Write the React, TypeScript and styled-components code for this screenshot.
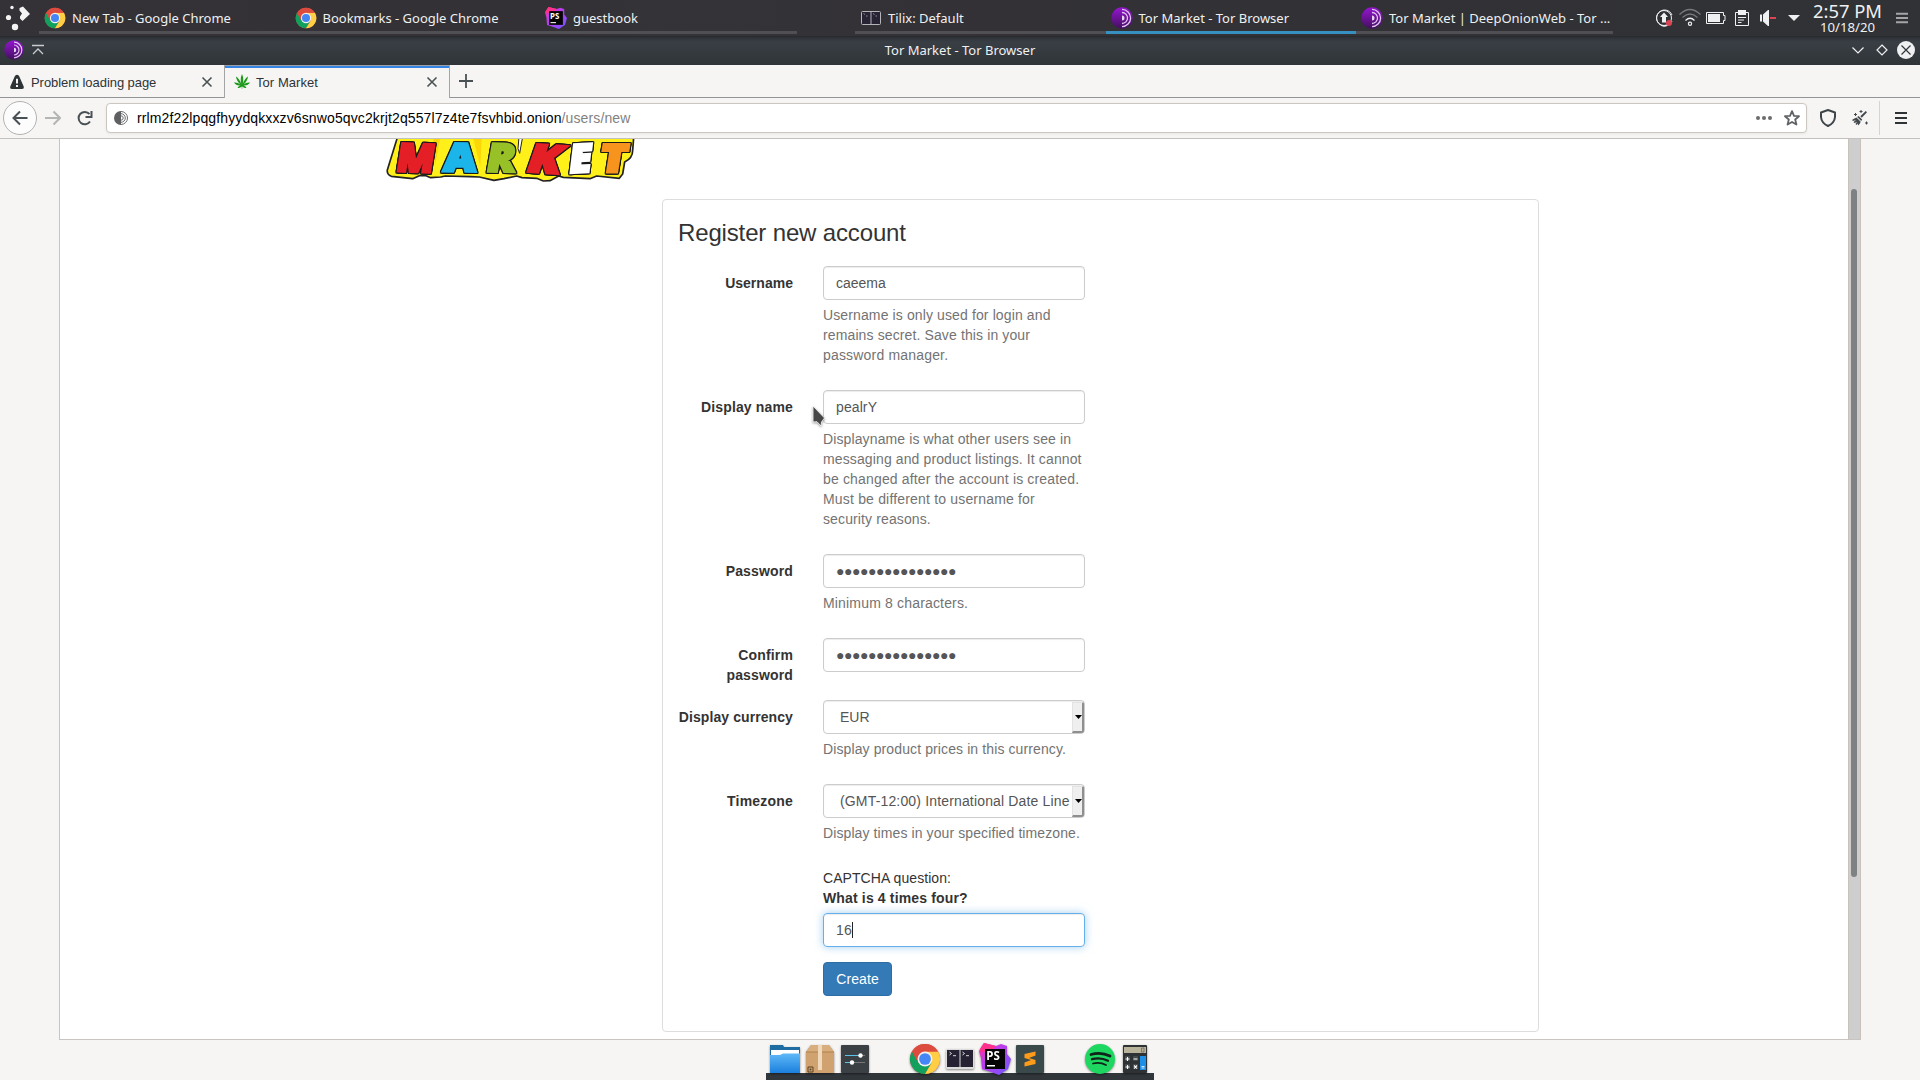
import React from 'react';
import styled, { createGlobalStyle, css } from 'styled-components';

const GlobalStyle = createGlobalStyle`
  * { box-sizing: border-box; }
  html, body { margin: 0; padding: 0; overflow: hidden; background: #f6f5f4; }
  body { font-family: "Liberation Sans", Arial, sans-serif; }
  svg { display: block; flex: none; }
`;

const Desktop = styled.div`
  width: 1920px;
  height: 1080px;
  display: flex;
  flex-direction: column;
  overflow: hidden;
  background: #f6f5f4;
`;

/* ---------- desktop panel ---------- */

const Panel = styled.div`
  height: 36px;
  flex: none;
  display: flex;
  background: linear-gradient(90deg, #343236 0%, #333135 30%, #343338 34%, #333135 52%, #303236 100%);
  color: #eff0f1;
  font-family: "Noto Sans", sans-serif;
`;
const Launcher = styled.div`
  width: 39px;
  padding: 4px 0 0 5px;
`;
const TaskGroup = styled.div<{ $gap: number }>`
  display: flex;
  width: 758px;
  margin-right: ${p => p.$gap}px;
`;
const Task = styled.div<{ $active?: boolean; $wide?: boolean }>`
  width: ${p => (p.$wide ? 257 : 250.5)}px;
  height: 34px;
  display: flex;
  align-items: flex-start;
  padding: 7px 0 0 5px;
  border-bottom: 3px solid ${p => (p.$active ? '#3690c0' : '#505054')};
`;
const TaskIcon = styled.span`
  width: 22px;
  height: 22px;
  margin-right: 6px;
`;
const TaskText = styled.span`
  font-size: 13px;
  line-height: 22px;
  white-space: nowrap;
`;
const Tray = styled.div`
  display: flex;
  gap: 4px;
  padding: 7px 0 0;
  margin-left: 40px;
`;
const Clock = styled.div`
  width: 74px;
  margin-left: 4px;
  padding-left: 3px;
  display: flex;
  flex-direction: column;
  align-items: center;
`;
const Time = styled.span`
  font-size: 18.4px;
  line-height: 22px;
  height: 20px;
  white-space: nowrap;
`;
const DateText = styled.span`
  font-size: 13.2px;
  line-height: 14px;
`;
const PanelMenu = styled.div`
  padding: 7px 0 0 8px;
`;

/* ---------- window title bar ---------- */

const TitleBar = styled.div`
  height: 29px;
  flex: none;
  display: grid;
  grid-template-columns: 1fr auto 1fr;
  align-items: center;
  padding-bottom: 1px;
  background: linear-gradient(180deg, #26282b 0, #30343a 2px, #393e45 6px, #373c42 12px, #2f3438 100%);
  color: #eff0f1;
  font: 13px/20px "Noto Sans", sans-serif;
`;
const TitleLeft = styled.div`
  display: flex;
  align-items: center;
  gap: 8px;
  padding-left: 4px;
`;
const TitleRight = styled.div`
  display: flex;
  justify-content: flex-end;
  gap: 4px;
  padding-right: 4px;
`;

/* ---------- browser chrome ---------- */

const TabStrip = styled.div`
  height: 33px;
  flex: none;
  display: flex;
  background: #f6f5f4;
  color: #2e3436;
  font-size: 13px;
`;
const Tab = styled.div<{ $active?: boolean }>`
  width: ${p => (p.$active ? 226 : 224)}px;
  display: flex;
  align-items: center;
  padding: 1px 9px 0 9px;
  border-bottom: 1px solid #929595;
  ${p =>
    p.$active &&
    css`
      border: solid #a3a5a5;
      border-width: 0 1px;
      box-shadow: inset 0 1px #9aa0a5, inset 0 3px #3584e4;
    `}
`;
const TabLabel = styled.span<{ $ls?: number }>`
  flex: 1;
  white-space: nowrap;
  padding-top: 1px;
  letter-spacing: ${p => p.$ls ?? 0}px;
`;
const TabIcon = styled.span`
  width: 16px;
  margin-right: 6px;
`;
const TabRest = styled.div`
  flex: 1;
  border-bottom: 1px solid #929595;
  padding: 8px 0 0 8px;
`;
const NavBar = styled.div`
  height: 41px;
  flex: none;
  display: flex;
  align-items: center;
  background: #f6f5f4;
  border-bottom: 1px solid #c3c1bd;
`;
const BackButton = styled.div`
  width: 34px;
  height: 34px;
  margin-left: 3px;
  border: 1px solid #b3b2b0;
  border-radius: 50%;
  background: #fcfcfc;
  display: flex;
  align-items: center;
  justify-content: center;
`;
const NavIcons = styled.div`
  display: flex;
  width: 69px;
  padding-left: 8px;
  gap: 15px;
`;
const UrlBar = styled.div`
  width: 1701px;
  height: 30px;
  display: flex;
  align-items: center;
  padding: 0 6px 0 7px;
  border: 1px solid #cbc7c0;
  border-radius: 4px;
  background: #fff;
  box-shadow: 0 1px 3px rgba(0, 0, 0, 0.06);
`;
const Url = styled.span`
  flex: 1;
  margin-left: 9px;
  font-size: 14px;
  letter-spacing: 0.12px;
  color: #000;
`;
const Path = styled.span`
  color: #828282;
`;
const StarIcon = styled.svg`
  margin-left: 12px;
`;
const NavRight = styled.div`
  display: flex;
  align-items: center;
  gap: 16px;
  margin-left: 13px;
`;
const Separator = styled.div`
  width: 1px;
  height: 34px;
  margin: 0 -3px 0 -5px;
  background: #d6d4d1;
`;

/* ---------- page ---------- */

const Viewport = styled.div`
  height: 901px;
  width: 1802px;
  flex: none;
  margin-left: 59px;
  display: flex;
  border: solid #c8c5c0;
  border-width: 0 0 1px 1px;
  background: #fff;
`;
const Page = styled.div`
  width: 1788px;
  padding-left: 326px;
`;
const LogoArea = styled.div`
  height: 60px;
`;
const LogoLetter = styled.text`
  font-family: "Open Sans", sans-serif;
  font-weight: 800;
  font-size: 116px;
  stroke-width: 9px;
  stroke-linejoin: miter;
`;
const LogoLetters = styled.g`
  filter: drop-shadow(3px 0 0 #1a1a1a) drop-shadow(-3px 0 0 #1a1a1a) drop-shadow(0 3px 0 #1a1a1a) drop-shadow(0 -3px 0 #1a1a1a);
`;
const Card = styled.div`
  width: 877px;
  height: 833px;
  margin-left: 276px;
  padding: 15px;
  border: 1px solid #ddd;
  border-radius: 4px;
  color: #333;
  font-size: 14px;
  line-height: 20px;
`;
const Heading = styled.h3`
  margin: 4px 0 20px;
  font-size: 24px;
  font-weight: 400;
  line-height: 27px;
  letter-spacing: -0.15px;
`;
const Group = styled.div`
  display: grid;
  grid-template-columns: 115px 262px;
  column-gap: 30px;
  margin-bottom: 15px;
`;
const Label = styled.label<{ $ls?: number }>`
  padding-top: 7px;
  font-weight: 700;
  text-align: right;
  white-space: nowrap;
  letter-spacing: ${p => p.$ls ?? 0.15}px;
`;
const Field = styled.div`
  grid-column: 2;
`;
const Control = styled.div<{ $focus?: boolean; $select?: boolean }>`
  height: 34px;
  display: flex;
  align-items: center;
  padding: ${p => (p.$select ? '0 0 0 16px' : '0 12px')};
  border: 1px solid ${p => (p.$focus ? '#66afe9' : '#ccc')};
  border-radius: 4px;
  color: #555;
  white-space: nowrap;
  overflow: hidden;
  box-shadow: inset 0 1px 1px rgba(0, 0, 0, 0.075)${p => p.$focus && ', 0 0 8px rgba(102, 175, 233, 0.6)'};
`;
const Value = styled.span<{ $ls?: number }>`
  flex: 1;
  letter-spacing: ${p => p.$ls ?? 0}px;
`;
const Dots = styled.span`
  font-size: 14px;
  letter-spacing: -0.46px;
`;
const Caret = styled.span`
  width: 1px;
  height: 16px;
  background: #222;
`;
const FocusValue = styled.span`
  letter-spacing: 0.1px;
`;
const DropButton = styled.span`
  width: 12px;
  height: 31px;
  margin-top: 1px;
  padding-left: 1px;
  display: flex;
  align-items: center;
  justify-content: center;
  background: #efefef;
  border: solid;
  border-width: 1px 2px 2px 1px;
  border-color: #e3e3e3 #8f8f8f #8f8f8f #e3e3e3;
`;
const Help = styled.div`
  margin: 5px 0 10px;
  color: #737373;
`;
const Line = styled.div<{ $ls: number }>`
  display: block;
  white-space: nowrap;
  letter-spacing: ${p => p.$ls}px;
`;
const Captcha = styled.div`
  margin-bottom: 5px;
`;
const CreateButton = styled.button`
  width: 69px;
  height: 34px;
  padding: 0;
  border: 1px solid #2e6da4;
  border-radius: 4px;
  background: #337ab7;
  color: #fff;
  font: 14px/20px "Liberation Sans", Arial, sans-serif;
  letter-spacing: 0.1px;
`;
const Scrollbar = styled.div`
  width: 13px;
  padding: 50px 0 0 2px;
  background: #cecece;
  border: solid #c8c2bb;
  border-width: 0 1px;
`;
const Thumb = styled.div`
  width: 6px;
  height: 688px;
  border-radius: 3px;
  background: #7e8282;
`;

/* ---------- dock and pointer ---------- */

const Dock = styled.div`
  width: 388px;
  height: 40px;
  flex: none;
  margin-left: 766px;
  border-bottom: 7px solid #31363b;
  padding: 2px 1px 0;
  display: grid;
  grid-template-columns: repeat(11, 35px);
  justify-items: center;
`;
const DockIcon = styled.span<{ $col: number; $drop?: boolean }>`
  grid-column: ${p => p.$col};
  grid-row: 1;
  width: 32px;
  height: 32px;
  margin-top: ${p => (p.$drop ? 1 : 0)}px;
  filter: drop-shadow(0 1px 1px rgba(0, 0, 0, 0.45));
`;
const Pointer = styled.svg`
  position: absolute;
  left: 808px;
  top: 403px;
  filter: drop-shadow(0 1px 1px rgba(0, 0, 0, 0.4));
`;

/* ---------- drawings ---------- */

const Chrome = ({ size }: { size: number }) => (
  <svg width={size} height={size} viewBox="0 0 48 48">
    <circle cx="24" cy="24" r="22.500" fill="#dd4b3e" />
    <path d="M4.500 12.700A22.500 22.500 0 0 0 24 46.500L34 29.800 24 24 14 29.800Z" fill="#12a05d" />
    <path d="M24 46.500A22.500 22.500 0 0 0 43.500 12.700H24L34 29.800Z" fill="#ffce44" />
    <path d="M4.500 12.700A22.500 22.500 0 0 1 43.500 12.700H24L14 29.800Z" fill="#dd4b3e" />
    <circle cx="24" cy="24" r="11.200" fill="#f1f1f1" />
    <circle cx="24" cy="24" r="8.800" fill="#4486f5" />
  </svg>
);

const PhpStorm = ({ size }: { size: number }) => (
  <svg width={size} height={size} viewBox="0 0 32 32">
    <defs>
      <linearGradient id="ps" x1="0" y1="0" x2="1" y2="1">
        <stop offset="0" stopColor="#ff318c" />
        <stop offset="0.35" stopColor="#c43be8" />
        <stop offset="1" stopColor="#6b57ff" />
      </linearGradient>
    </defs>
    <path d="M5 0 17 3 22 1 28 3 28 11 32 16 29 26 20 32 9 28 3 26 2 15 0 8Z" fill="url(#ps)" />
    <path d="M5 0 17 3 12 8 2 9 1 6Z" fill="#ff318c" />
    <rect x="6" y="6" width="20" height="20" fill="#050505" />
    <text x="7.3" y="17" fontFamily="Noto Sans, sans-serif" fontWeight="700" fontSize="11.5" fill="#fff">PS</text>
    <rect x="8" y="22" width="8" height="1.500" fill="#fff" />
  </svg>
);

const Tilix = ({ size }: { size: number }) => (
  <svg width={size} height={size} viewBox="0 0 32 32">
    <rect x="2" y="7" width="28" height="20" rx="1.500" fill="#dcdcdc" />
    <rect x="3" y="8" width="12.500" height="17" fill="#262233" />
    <rect x="16.500" y="8" width="12.500" height="17" fill="#262233" />
    <path d="M5.500 10l2 1.500-2 1.500M9 13.700h3M18.500 10l2 1.500-2 1.500M22 13.700h3" stroke="#eee" strokeWidth="0.9" fill="none" />
  </svg>
);

const TaskTilix = () => (
  <svg width="22" height="22" viewBox="0 0 22 22">
    <rect x="1.500" y="4.500" width="19" height="13" rx="1" fill="#272334" stroke="#b5b4b8" />
    <path d="M11 4.500v13" stroke="#b5b4b8" />
    <path d="M3.500 6.500l1.500 1M6 9h1.500M13 6.500l1.500 1M15.500 9H17" stroke="#8d8a97" fill="none" />
  </svg>
);

const Tor = ({ size }: { size: number }) => (
  <svg width={size} height={size} viewBox="0 0 22 22">
    <defs>
      <linearGradient id="tor" x1="0" y1="0" x2="0" y2="1">
        <stop offset="0" stopColor="#9516d0" />
        <stop offset="1" stopColor="#42105e" />
      </linearGradient>
    </defs>
    <circle cx="11" cy="11" r="10.700" fill="url(#tor)" />
    <path d="M11 8.500a2.500 2.500 0 0 1 0 5Z" fill="#e6d3f0" />
    <path d="M11 5.500a5.500 5.500 0 0 1 0 11M11 2.400a8.600 8.600 0 0 1 0 17.200" fill="none" stroke="#e0c6ee" strokeWidth="1.300" />
  </svg>
);

const Stroke = ({ d, size = 16, color = '#4a5154', w = 2 }: { d: string; size?: number; color?: string; w?: number }) => (
  <svg width={size} height={size} viewBox={`0 0 ${size} ${size}`} fill="none" stroke={color} strokeWidth={w}>
    <path d={d} />
  </svg>
);

const DownTriangle = () => (
  <svg width="7" height="4" viewBox="0 0 7 4">
    <path d="M0 0h7L3.500 4Z" fill="#000" />
  </svg>
);

const logoLetters = [
  { ch: 'M', x: 76, y: 123, w: 112, fill: '#e51f26', r: 2, k: -7 },
  { ch: 'A', x: 220, y: 123, w: 96, fill: '#1cb5ea', r: 1, k: -3 },
  { ch: 'R', x: 346, y: 124, w: 84, fill: '#97c127', r: 1, k: -9 },
  { ch: 'K', x: 464, y: 124, w: 98, fill: '#e51f26', r: 4, k: -15 },
  { ch: 'E', x: 594, y: 128, w: 66, fill: '#ffffff', r: -3, k: -10 },
  { ch: 'T', x: 686, y: 126, w: 80, fill: '#f7941d', r: 0, k: -9 },
];

const Logo = () => (
  <svg width="249" height="45" viewBox="48 27 747 135">
    <path
      d="M86 10 52 120Q50 133 64 139L128 146 148 137 168 137 182 143 212 141 226 138 300 140 328 141 372 151 402 146 440 138 456 143 500 145 520 153 540 152 566 138 580 142 660 146 680 138 748 145 758 132 764 96Q788 84 788 62L792 10Z"
      fill="#fff01a" stroke="#222" strokeWidth="5" strokeLinejoin="round"
    />
    <path d="M190 27l20 0-14 76zM310 27l25 0-4 85z" fill="#fcd707" />
    <path d="M447 20 458 20 449 70 444 56Z" fill="#fff" stroke="#222" strokeWidth="3" />
    <LogoLetters>
      {logoLetters.map(l => (
        <LogoLetter
          key={l.ch}
          transform={`translate(${l.x} ${l.y}) rotate(${l.r}) skewX(${l.k})`}
          textLength={l.w}
          lengthAdjust="spacingAndGlyphs"
          fill={l.fill}
          stroke={l.fill}
        >
          {l.ch}
        </LogoLetter>
      ))}
    </LogoLetters>
  </svg>
);

const leftTasks = [
  { icon: <Chrome size={22} />, text: 'New Tab - Google Chrome' },
  { icon: <Chrome size={22} />, text: 'Bookmarks - Google Chrome' },
  { icon: <PhpStorm size={22} />, text: 'guestbook' },
];
const rightTasks = [
  { icon: <TaskTilix />, text: 'Tilix: Default' },
  { icon: <Tor size={22} />, text: 'Tor Market - Tor Browser', active: true },
  { icon: <Tor size={22} />, text: 'Tor Market | DeepOnionWeb - Tor ...' },
];

const Tasks = ({ items, gap }: { items: { icon: React.ReactNode; text: string; active?: boolean }[]; gap: number }) => (
  <TaskGroup $gap={gap}>
    {items.map((t, i) => (
      <Task key={t.text} $active={t.active} $wide={i === 2}>
        <TaskIcon>{t.icon}</TaskIcon>
        <TaskText>{t.text}</TaskText>
      </Task>
    ))}
  </TaskGroup>
);

const TrayIcons = () => (
  <Tray>
    <svg width="22" height="22" viewBox="0 0 22 22" fill="none">
      <path d="M19 14A8 8 0 1 1 19 8M14 18.500A8 8 0 0 1 8 18.500" stroke="#eff0f1" />
      <circle cx="11" cy="11" r="7.500" stroke="#eff0f1" />
      <path d="M11 5.500 15 10H13v5.500H9V10H7Z" fill="#eff0f1" />
      <circle cx="16" cy="16" r="3" fill="#da4453" />
    </svg>
    <svg width="22" height="22" viewBox="0 0 22 22" fill="none" stroke="#77797c" strokeWidth="1.200">
      <path d="M.5 7.500Q11-2.500 21.500 7.500M3.500 10.500q7.500-7 15 0" />
      <path d="M6.500 13.500q4.500-4.500 9 0" stroke="#eff0f1" />
      <circle cx="11" cy="16.800" r="1.600" stroke="#eff0f1" />
    </svg>
    <svg width="22" height="22" viewBox="0 0 22 22" fill="none">
      <path d="M1.500 5.500h17v3h1.500v5h-1.500v3h-17Z" stroke="#eff0f1" />
      <rect x="3" y="7" width="12" height="8" fill="#eff0f1" />
    </svg>
    <svg width="22" height="22" viewBox="0 0 22 22" fill="none">
      <path d="M4.500 5.500h13v13h-13Z" stroke="#eff0f1" />
      <path d="M7 3h8v5H7Z" fill="#eff0f1" />
      <path d="M7 10.500h8M7 13h6M7 15.500h3.500" stroke="#eff0f1" />
    </svg>
    <svg width="22" height="22" viewBox="0 0 22 22">
      <path d="M3 7.500h2v7H3ZM6 7.500 11 3h1v16h-1L6 14.500Z" fill="#eff0f1" />
      <rect x="13" y="10" width="6" height="2" fill="#da4453" />
    </svg>
    <svg width="22" height="22" viewBox="0 0 22 22">
      <path d="M5 8h12l-6 6Z" fill="#eff0f1" />
    </svg>
  </Tray>
);

const TextGroup = ({ label, ls, value, valueLs, password, select, help }: {
  label: React.ReactNode; ls?: number; value: React.ReactNode; valueLs?: number;
  password?: boolean; select?: boolean; help?: [string, number][];
}) => (
  <Group>
    <Label $ls={ls}>{label}</Label>
    <Field>
      <Control $select={select}>
        {password ? <Dots>{value}</Dots> : <Value $ls={valueLs}>{value}</Value>}
        {select && <DropButton><DownTriangle /></DropButton>}
      </Control>
      {help && (
        <Help>
          {help.map(([t, s]) => <Line key={t} $ls={s}>{t}</Line>)}
        </Help>
      )}
    </Field>
  </Group>
);

const H = 0.12;

export default function App() {
  return (
    <Desktop>
      <GlobalStyle />
      <Panel>
        <Launcher>
          <svg width="26" height="28" viewBox="0 0 26 28" fill="#f4f4f4">
            <circle cx="7" cy="3.500" r="1.700" />
            <circle cx="3.500" cy="13.500" r="2.600" />
            <circle cx="10" cy="23" r="3.200" />
            <path d="M14.500 4 18 2.500 25 10 17.500 17 15 14.500V12.500L17 9.500 14.500 6.500Z" />
          </svg>
        </Launcher>
        <Tasks items={leftTasks} gap={58} />
        <Tasks items={rightTasks} gap={0} />
        <TrayIcons />
        <Clock>
          <Time>2:57 PM</Time>
          <DateText>10/18/20</DateText>
        </Clock>
        <PanelMenu>
          <Stroke size={22} d="M5 6.800h12M5 11h12M5 15.200h12" color="#a5a5a8" />
        </PanelMenu>
      </Panel>

      <TitleBar>
        <TitleLeft>
          <Tor size={20} />
          <Stroke size={12} d="M0 1.500h12M1 10l5-5 5 5" color="#c9cbcd" w={1.300} />
        </TitleLeft>
        <span>Tor Market - Tor Browser</span>
        <TitleRight>
          <Stroke size={20} d="M4.500 7.500l5.500 5.500 5.500-5.500" color="#eff0f1" w={1.200} />
          <Stroke size={20} d="M10 5l5 5-5 5-5-5Z" color="#eff0f1" w={1.200} />
          <svg width="20" height="20" viewBox="0 0 20 20">
            <circle cx="10" cy="10" r="9" fill="#eff0f1" />
            <path d="M5.500 5.500l9 9M14.500 5.500l-9 9" stroke="#31363b" strokeWidth="1.200" />
          </svg>
        </TitleRight>
      </TitleBar>

      <TabStrip>
        <Tab>
          <TabIcon>
            <svg width="16" height="16" viewBox="0 0 16 16">
              <path d="M8 .8Q9.600.8 10.200 2.300L14.700 12.500Q15.300 15 13 15H3Q.7 15 1.300 12.500L5.800 2.300Q6.400.8 8 .8Z" fill="#2e3436" />
              <path d="M8 4.800v4.700M8 11v2" stroke="#f6f5f4" strokeWidth="2" />
            </svg>
          </TabIcon>
          <TabLabel $ls={-0.06}>Problem loading page</TabLabel>
          <Stroke d="M3.500 3.500l9 9M12.500 3.500l-9 9" w={1.600} />
        </Tab>
        <Tab $active>
          <TabIcon>
            <svg width="16" height="16" viewBox="0 0 16 16" fill="#1e9a1b">
              <path d="M8 0Q10.200 5 8.600 10Q11 4 14 2.500Q13.500 7 9.500 10.500Q12.500 8 16 8.500Q14 12 9.500 11.500Q11.500 12 12.500 13.800Q10 14.500 8.300 12.500L8.200 15H7.800L7.700 12.500Q6 14.500 3.500 13.800Q4.500 12 6.500 11.500Q2 12 0 8.500Q3.500 8 6.500 10.500Q2.500 7 2 2.500Q5 4 7.400 10Q5.800 5 8 0Z" />
            </svg>
          </TabIcon>
          <TabLabel $ls={0.06}>Tor Market</TabLabel>
          <Stroke d="M3.500 3.500l9 9M12.500 3.500l-9 9" w={1.600} />
        </Tab>
        <TabRest>
          <Stroke d="M8 1v14M1 8h14" w={1.800} />
        </TabRest>
      </TabStrip>

      <NavBar>
        <BackButton>
          <Stroke d="M15.500 8H1.500M8 1.500 1.500 8 8 14.500" />
        </BackButton>
        <NavIcons>
          <Stroke d="M0 8h14.500M8.500 1.500 15 8l-6.500 6.500" color="#b4b5b5" />
          <svg width="18" height="16" viewBox="0 0 18 16" fill="none" stroke="#4a5154" strokeWidth="2">
            <path d="M14 11.500A6.200 6.200 0 1 1 13.500 4" />
            <path d="M15.500 1v6H9.500" />
          </svg>
        </NavIcons>
        <UrlBar>
          <svg width="14" height="14" viewBox="0 0 14 14">
            <path d="M7 0a7 7 0 0 0 0 14Z" fill="#5f6061" />
            <path d="M7 .5a6.500 6.500 0 0 1 0 13M7 2.700a4.300 4.300 0 0 1 0 8.600M7 4.800a2.200 2.200 0 0 1 0 4.400" fill="none" stroke="#6c6d6e" />
          </svg>
          <Url>
            rrlm2f22lpqgfhyydqkxxzv6snwo5qvc2krjt2q557l7z4te7fsvhbid.onion<Path>/users/new</Path>
          </Url>
          <svg width="16" height="16" viewBox="0 0 16 16" fill="#6a6c6d">
            <circle cx="2" cy="8" r="2" /><circle cx="8" cy="8" r="2" /><circle cx="14" cy="8" r="2" />
          </svg>
          <StarIcon width="16" height="16" viewBox="0 0 16 16" fill="none" stroke="#5f6365" strokeWidth="1.800" strokeLinejoin="round">
            <path d="M8 1.200l2 4.600 5 .4-3.800 3.300 1.200 5L8 12l-4.400 2.500 1.200-5L1 6.200l5-.4Z" />
          </StarIcon>
        </UrlBar>
        <NavRight>
          <svg width="16" height="18" viewBox="0 0 16 18" fill="none" stroke="#3e4548" strokeWidth="2" strokeLinejoin="round">
            <path d="M8 1 15 3.500V8Q14.500 14 8 17 1.500 14 1 8V3.500Z" />
          </svg>
          <svg width="16" height="16" viewBox="0 0 16 16" fill="#43494d">
            <path d="M13.700 1 15 2.300 9.800 7.800 8.300 6.200Z" />
            <path d="M6.500 6 10.200 9.600 9.200 11 5.200 7Z" />
            <path d="M4.500 7.500 8.700 11.700Q8 14 6 15.500L5.800 13.500 4.500 15 3.500 14 5 12 2.500 13 1.500 12 4 10.200.5 11V9.500Q2.500 8.500 4.500 7.500Z" />
            <path d="M8.500 0h1v1h1v1h-1v1h-1V2h-1V1h1ZM3 3h1v1h1v1H4v1H3V5H2V4h1ZM14 11.500h1v1h1v1h-1v1h-1v-1h-1v-1h1Z" />
          </svg>
          <Separator />
          <Stroke d="M2 3h12M2 8h12M2 13h12" color="#2e3436" />
        </NavRight>
      </NavBar>

      <Viewport>
        <Page>
          <LogoArea><Logo /></LogoArea>
          <Card>
            <Heading>Register new account</Heading>
            <TextGroup
              label="Username"
              ls={0.02}
              value="caeema"
              help={[['Username is only used for login and', H], ['remains secret. Save this in your', H], ['password manager.', 0.18]]}
            />
            <TextGroup
              label="Display name"
              value="pealrY"
              valueLs={0.1}
              help={[
                ['Displayname is what other users see in', H],
                ['messaging and product listings. It cannot', H],
                ['be changed after the account is created.', 0.16],
                ['Must be different to username for', 0.18],
                ['security reasons.', H],
              ]}
            />
            <TextGroup label="Password" value="●●●●●●●●●●●●●●●" password help={[['Minimum 8 characters.', 0.17]]} />
            <TextGroup label={<>Confirm<br />password</>} value="●●●●●●●●●●●●●●●" password />
            <TextGroup label="Display currency" ls={0.09} value="EUR" select help={[['Display product prices in this currency.', 0.11]]} />
            <TextGroup
              label="Timezone"
              ls={0.2}
              value="(GMT-12:00) International Date Line"
              valueLs={0.16}
              select
              help={[['Display times in your specified timezone.', 0.1]]}
            />
            <Group>
              <Field>
                <Captcha>
                  <Line $ls={0.07}>CAPTCHA question:</Line>
                  <Line $ls={0.15} as="strong">What is 4 times four?</Line>
                </Captcha>
                <Control $focus>
                  <FocusValue>16</FocusValue>
                  <Caret />
                </Control>
              </Field>
            </Group>
            <Group>
              <Field><CreateButton>Create</CreateButton></Field>
            </Group>
          </Card>
        </Page>
        <Scrollbar><Thumb /></Scrollbar>
      </Viewport>

      <Dock>
        <DockIcon $col={1}>
          <svg width="32" height="32" viewBox="0 0 32 32">
            <defs>
              <linearGradient id="folder" x1="0" y1="0" x2="0" y2="1"><stop offset="0" stopColor="#5fb8f8" /><stop offset="1" stopColor="#1b80dd" /></linearGradient>
            </defs>
            <path d="M1 3h13l1 2h16v20H1Z" fill="#1f6ca3" />
            <path d="M2 8h28v8H2Z" fill="#fff" />
            <path d="M1 13h10l3-1.500h17V31H1Z" fill="url(#folder)" />
          </svg>
        </DockIcon>
        <DockIcon $col={2}>
          <svg width="32" height="32" viewBox="0 0 32 32">
            <path d="M7 3h18l5 7v21H2V10Z" fill="#cfa26f" />
            <path d="M7 3h18l5 7H2Z" fill="#d8ae7e" />
            <path d="M2 10h28" stroke="#b0814e" />
            <path d="M14 3h4v25h-4Z" fill="#f0d9ba" />
            <path d="M4 25h5v5H4Z" fill="none" stroke="#5a4226" />
            <circle cx="6.500" cy="27.500" r="1" fill="#5a4226" />
          </svg>
        </DockIcon>
        <DockIcon $col={3}>
          <svg width="32" height="32" viewBox="0 0 32 32">
            <rect x="2" y="3" width="28" height="28" rx="1" fill="#3b4045" />
            <path d="M22 13.500h4M14 20.500h12" stroke="#73777a" />
            <path d="M6 13.500h15M6 20.500h7" stroke="#5bc0ea" />
            <circle cx="21.500" cy="13.500" r="2.200" fill="#fff" /><circle cx="13" cy="20.500" r="2.200" fill="#fff" />
          </svg>
        </DockIcon>
        <DockIcon $col={5} $drop><Chrome size={32} /></DockIcon>
        <DockIcon $col={6}><Tilix size={32} /></DockIcon>
        <DockIcon $col={7} $drop><PhpStorm size={32} /></DockIcon>
        <DockIcon $col={8}>
          <svg width="32" height="32" viewBox="0 0 32 32">
            <rect x="2" y="3" width="28" height="28" rx="1" fill="#3a4a4a" />
            <path d="M21.500 9.500v4L15 16l6.500 2v4L10.500 24.500v-4L17 18l-6.500-2v-4Z" fill="#ff9b1a" />
          </svg>
        </DockIcon>
        <DockIcon $col={10}>
          <svg width="32" height="32" viewBox="0 0 32 32" fill="none" stroke="#10231a" strokeLinecap="round">
            <circle cx="16" cy="17" r="15" fill="#1ed760" stroke="none" />
            <path d="M7 12.500q10-3 19 1.500" strokeWidth="2.800" />
            <path d="M8 17.200q8.500-2.400 16 1.600" strokeWidth="2.300" />
            <path d="M9 21.500q7-1.800 13 1.500" strokeWidth="1.800" />
          </svg>
        </DockIcon>
        <DockIcon $col={11}>
          <svg width="32" height="32" viewBox="0 0 32 32">
            <rect x="4" y="3" width="24" height="28" rx="1" fill="#2f3235" />
            <rect x="5" y="5" width="22" height="6" fill="#b9b39c" />
            <path d="M22.500 6h2.500v4h-2.500Z" fill="none" stroke="#6d6959" strokeWidth="0.8" />
            <path d="M6 14h5v5H6ZM14 14h5v5h-5ZM6 22h5v5H6ZM14 22h5v5h-5Z" fill="#45494c" />
            <path d="M6.500 17h4M8.500 15v4M14.500 17h4M6.500 25h4M8.500 23v4M15 23.500l3 3M18 23.500l-3 3" stroke="#fff" strokeWidth="1.100" />
            <rect x="21" y="14" width="6" height="14" fill="#1e8fe6" />
            <path d="M22.500 24.500h3M22.500 26h3" stroke="#fff" strokeWidth="0.8" />
          </svg>
        </DockIcon>
      </Dock>

      <Pointer width="20" height="26" viewBox="0 0 20 26">
        <path d="M5 3V19L9 18.700 13 23 13.500 19 16.500 15Z" fill="#464646" stroke="#fff" strokeWidth="0.8" />
      </Pointer>
    </Desktop>
  );
}
